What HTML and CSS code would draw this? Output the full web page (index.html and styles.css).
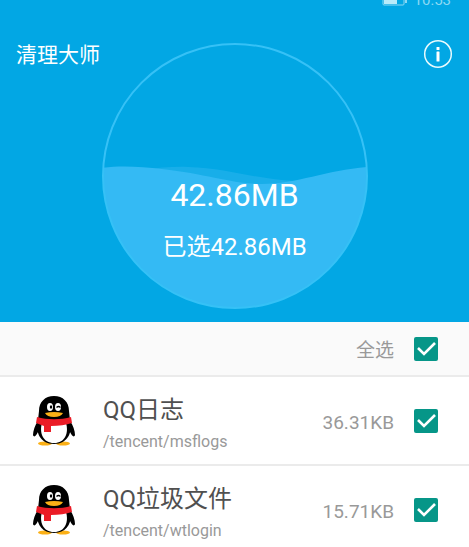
FILE: index.html
```html
<!DOCTYPE html>
<html lang="zh-CN">
<head>
    <meta charset="UTF-8">
    <meta name="viewport" content="width=device-width, initial-scale=1.0">
    <title>清理大师</title>
    <link rel="stylesheet" href="styles.css">
</head>
<body>

    <!-- shapes used more than once -->
    <svg class="defs" width="0" height="0" aria-hidden="true">
        <symbol id="penguin" viewBox="0 0 42 50">
            <ellipse cx="12" cy="47.500" rx="7" ry="2" fill="#fbb016"/>
            <ellipse cx="30" cy="47.500" rx="7" ry="2" fill="#fbb016"/>
            <path d="M5 25C2 29 0 35 0 39c1 3 3 1 5-3zM37 25c3 4 5 10 5 14-1 3-3 1-5-3z" fill="#000"/>
            <path d="M21 0C12 0 6 6 6 15l-1 9C2 36 7 48 21 48s19-12 16-24l-1-9C36 6 30 0 21 0z" fill="#000"/>
            <path d="M9 27c-3 10 1 20 12 20s15-10 12-20z" fill="#fff"/>
            <path d="M4 21c10 3 24 3 34 0l1 6c-6 2-13 3-21 3l0 6-7 0 0-6-8-3z" fill="#eb1c26"/>
            <ellipse cx="17" cy="11" rx="3" ry="4" fill="#fff"/>
            <ellipse cx="25" cy="11" rx="3" ry="4" fill="#fff"/>
            <ellipse cx="18" cy="11" rx="1.200" ry="1.700" fill="#000"/>
            <path d="M23.500 11.500q2-2 4 0" fill="none" stroke="#000" stroke-width="1.200"/>
            <path d="M12 17q9-2 18 0-2 4-9 4t-9-4z" fill="#fbb016"/>
        </symbol>
    </svg>

    <header class="top">
        <div class="status">
            <svg class="battery" viewBox="0 0 26 12" aria-hidden="true">
                <rect x="1" y="1" width="21" height="10" rx="1" fill="none" stroke="#8bd8f3" stroke-width="1"/>
                <rect x="2" y="2" width="13" height="8" fill="#b9ebfa"/>
                <rect x="23" y="4" width="2" height="5" fill="#8bd8f3"/>
            </svg>
            <span>10:53</span>
        </div>

        <div class="bar">
            <h1>清理大师</h1>
            <button class="info" type="button" aria-label="关于">
                <svg viewBox="0 0 30 30" aria-hidden="true">
                    <circle cx="15" cy="15" r="13.300" fill="none" stroke="#e9fafd" stroke-width="1.500"/>
                    <rect x="13.500" y="8" width="3" height="3" rx=".5" fill="#fff"/>
                    <rect x="13.500" y="12.500" width="3" height="10" rx=".5" fill="#fff"/>
                </svg>
            </button>
        </div>

        <div class="gauge">
            <svg class="wave" viewBox="0 0 266 266" aria-hidden="true">
                <clipPath id="inside"><circle cx="133" cy="133" r="132"/></clipPath>
                <g clip-path="url(#inside)">
                    <path d="M0 135C30 128 60 123 86 124c40 1 65 12 107 14l0 20L0 158z" fill="#18aee9"/>
                    <path d="M0 125C20 122 40 124 60 126c45 5 70 15 100 15 35 0 65-14 106-17l0 142L0 266z" fill="#34baf4"/>
                </g>
                <circle cx="133" cy="133" r="132" fill="none" stroke="#36c1f6" stroke-width="2"/>
            </svg>
            <p class="total">42.86MB</p>
            <p class="picked">已选42.86MB</p>
        </div>
    </header>

    <main>
        <div class="select-all">
            <label for="all">全选</label>
            <input type="checkbox" id="all" checked>
        </div>

        <ul class="list">
            <li class="item">
                <svg class="icon" aria-hidden="true"><use href="#penguin"/></svg>
                <label class="info-text" for="log">
                    <span class="name">QQ日志</span>
                    <span class="path">/tencent/msflogs</span>
                </label>
                <span class="size">36.31KB</span>
                <input type="checkbox" id="log" checked>
            </li>
            <li class="item">
                <svg class="icon" aria-hidden="true"><use href="#penguin"/></svg>
                <label class="info-text" for="junk">
                    <span class="name">QQ垃圾文件</span>
                    <span class="path">/tencent/wtlogin</span>
                </label>
                <span class="size">15.71KB</span>
                <input type="checkbox" id="junk" checked>
            </li>
        </ul>
    </main>

    <script>
        const all = document.querySelector("#all");
        const boxes = document.querySelectorAll(".item input");

        all.addEventListener("change", () => {
            boxes.forEach((box) => {
                box.checked = all.checked;
            });
        });

        boxes.forEach((box) => {
            box.addEventListener("change", () => {
                all.checked = [...boxes].every((b) => b.checked);
            });
        });
    </script>
</body>
</html>
```

FILE: styles.css
```css
*{
    margin: 0;
    padding: 0;
    box-sizing: border-box;
}

body{
    font-family: Roboto, "Noto Sans CJK SC", sans-serif;
    background-color: #fff;
    color: #505050;
}

.defs{
    position: absolute;
}

/* blue header */

.top{
    background-color: #02a7e4;
    color: #fff;
    padding-bottom: 13px;
}

.status{
    display: flex;
    justify-content: flex-end;
    align-items: flex-end;
    gap: 6px;
    height: 8px;
    padding-right: 18px;
    overflow: hidden;
    font-size: 15px;
    line-height: 16px;
    color: #8bd8f3;
}

.battery{
    width: 26px;
    height: 12px;
    flex: none;
    margin-bottom: 2px;
}

.bar{
    display: flex;
    justify-content: space-between;
    align-items: center;
    height: 92px;
    padding: 0 16px;
}

h1{
    padding-top: 2px;
    font-size: 21px;
    line-height: 32px;
    font-weight: 400;
}

.info{
    width: 30px;
    height: 30px;
    border: none;
    background: none;
    cursor: pointer;
}

.info svg{
    display: block;
    width: 30px;
    height: 30px;
}

.gauge{
    position: relative;
    width: 266px;
    height: 266px;
    margin: -57px auto 0;
    padding-top: 132px;
    text-align: center;
}

.wave{
    position: absolute;
    top: 0;
    left: 0;
    width: 100%;
    height: 100%;
}

.total, .picked{
    position: relative;
}

.total{
    font-size: 32px;
    line-height: 40px;
}

.picked{
    margin-top: 16px;
    font-size: 24px;
    line-height: 32px;
}

/* list */

.select-all{
    display: flex;
    justify-content: flex-end;
    align-items: center;
    gap: 20px;
    height: 55px;
    padding-right: 31px;
    background-color: #fafafa;
    border-bottom: 2px solid #ebebeb;
}

.select-all label, .size{
    padding-top: 4px;
    font-size: 19px;
    line-height: 24px;
    color: #999;
}

.list{
    list-style: none;
}

.item{
    display: flex;
    align-items: center;
    height: 89px;
    padding: 0 31px 0 33px;
    border-bottom: 2px solid #ebebeb;
}

.icon{
    width: 42px;
    height: 50px;
    flex: none;
}

.info-text{
    display: flex;
    flex-direction: column;
    gap: 4px;
    flex: 1;
    margin-left: 28px;
    padding-top: 6px;
}

.name{
    font-size: 24px;
    line-height: 32px;
}

.path{
    font-size: 16px;
    line-height: 24px;
    color: #999;
}

.size{
    margin-right: 20px;
}

input[type="checkbox"]{
    appearance: none;
    width: 24px;
    height: 24px;
    flex: none;
    border: 2px solid #999;
    border-radius: 2px;
    cursor: pointer;
}

input[type="checkbox"]:checked{
    border: none;
    background: #069688 url("data:image/svg+xml,%3Csvg xmlns='http://www.w3.org/2000/svg' viewBox='0 0 24 24'%3E%3Cpath d='M4 11l6 6L21 6' fill='none' stroke='white' stroke-width='2.6'/%3E%3C/svg%3E") center / 24px 24px no-repeat;
}
```
